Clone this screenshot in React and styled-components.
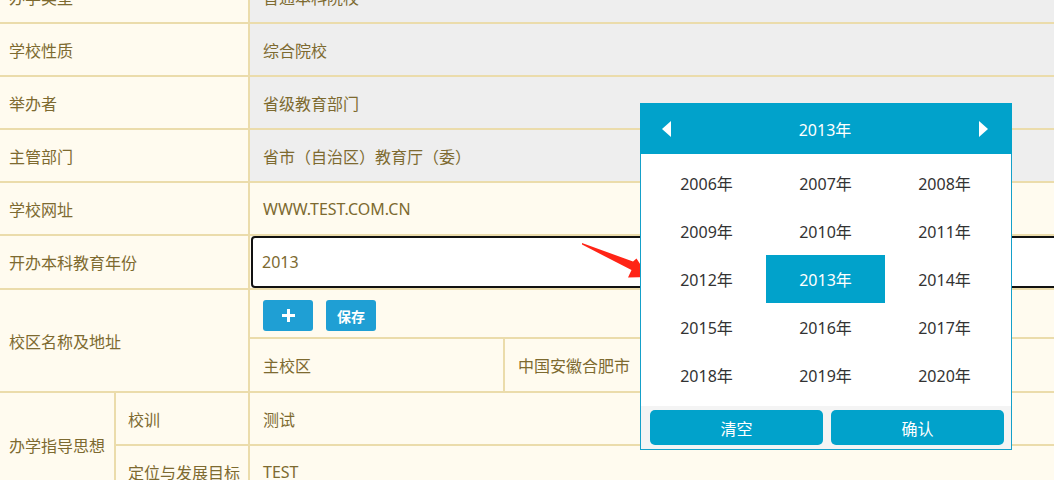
import React from 'react'
import styled, { createGlobalStyle } from 'styled-components'

const GlobalStyle = createGlobalStyle`
  html, body {
    margin: 0;
    padding: 0;
    background: #fffbef;
    overflow: hidden;
  }
  body {
    font-family: "Noto Sans", "Noto Sans CJK SC", sans-serif;
  }
`

const Page = styled.div`
  position: relative;
  width: 1054px;
  height: 480px;
  overflow: hidden;
`

const Table = styled.table`
  border-collapse: collapse;
  table-layout: fixed;
  width: 1400px;
  margin: -31px 0 0 -2px;
  background: #fffbef;
  color: #7d6a30;
  font-size: 16px;

  td {
    border: 2px solid #ebdcab;
    height: 51px;
    padding: 0 13px;
    white-space: nowrap;
    overflow: hidden;
  }
`

const Label = styled.td`
  && {
    padding-left: ${p => p.$sub ? '12px' : '9px'};
  }
`

const Value = styled.td`
  background: ${p => p.$gray ? '#eeeeee' : 'transparent'};
  && {
    height: ${p => p.$h || 51}px;
  }
`

const InputCell = styled.td`
  && {
    padding: 0;
  }
`

const YearInput = styled.div`
  box-sizing: border-box;
  height: 52px;
  margin-left: 1px;
  border: 2px solid #111;
  border-radius: 4px;
  background: #fff;
  display: flex;
  align-items: center;
  padding-left: 9px;
  color: #7d6a30;
`

const Tools = styled.div`
  display: flex;
  gap: 13px;
  padding-top: 4px;
`

const SmallBtn = styled.button`
  width: 50px;
  height: 31px;
  border: none;
  border-radius: 3px;
  background: #1f9fd4;
  color: #fff;
  font-family: "Noto Sans CJK SC", sans-serif;
  font-weight: 700;
  font-size: 14px;
  display: flex;
  align-items: center;
  justify-content: center;
  padding: 0;
`

const Picker = styled.div`
  position: absolute;
  left: 640px;
  top: 103px;
  width: 372px;
  box-sizing: border-box;
  border: 1px solid #15a0c9;
  border-top: none;
  background: #fff;
`

const PickerHead = styled.div`
  height: 51px;
  margin: 0 -1px;
  background: #01a2cb;
  color: #fff;
  display: flex;
  align-items: center;
  justify-content: space-between;
  padding: 0 24px 0 22px;
  font-size: 16px;
`

const Tri = styled.span`
  width: 0;
  height: 0;
  border-top: 8px solid transparent;
  border-bottom: 8px solid transparent;
  ${p => p.$dir === 'left'
    ? 'border-right: 9px solid #fff;'
    : 'border-left: 9px solid #fff;'}
`

const YearGrid = styled.div`
  display: grid;
  grid-template-columns: repeat(3, 119px);
  grid-auto-rows: 48px;
  padding: 5px 7px 7px 6px;
`

const YearCell = styled.div`
  display: flex;
  align-items: center;
  justify-content: center;
  font-size: 16px;
  color: ${p => p.$active ? '#fff' : '#333'};
  background: ${p => p.$active ? '#01a2cb' : 'transparent'};
`

const PickerFoot = styled.div`
  background: #f4f4f4;
  display: flex;
  gap: 8px;
  padding: 4px 7px 4px 9px;
`

const FootBtn = styled.button`
  flex: 1;
  height: 35px;
  border: none;
  border-radius: 5px;
  background: #01a2cb;
  color: #fff;
  font-family: "Noto Sans CJK SC", sans-serif;
  font-size: 16px;
  padding: 0;
`

const Arrow = styled.svg`
  position: absolute;
  left: 0;
  top: 0;
  pointer-events: none;
`

const years = Array.from({ length: 15 }, (_, i) => 2006 + i)

export default function App() {
  return (
    <Page>
      <GlobalStyle />
      <Table>
        <colgroup>
          <col style={{ width: 116 }} />
          <col style={{ width: 134 }} />
          <col style={{ width: 255 }} />
          <col />
        </colgroup>
        <tbody>
          <tr>
            <Label colSpan={2}>办学类型</Label>
            <Value colSpan={2} $gray>普通本科院校</Value>
          </tr>
          <tr>
            <Label colSpan={2}>学校性质</Label>
            <Value colSpan={2} $gray>综合院校</Value>
          </tr>
          <tr>
            <Label colSpan={2}>举办者</Label>
            <Value colSpan={2} $gray>省级教育部门</Value>
          </tr>
          <tr>
            <Label colSpan={2}>主管部门</Label>
            <Value colSpan={2} $gray>省市（自治区）教育厅（委）</Value>
          </tr>
          <tr>
            <Label colSpan={2}>学校网址</Label>
            <Value colSpan={2}>WWW.TEST.COM.CN</Value>
          </tr>
          <tr>
            <Label colSpan={2}>开办本科教育年份</Label>
            <InputCell colSpan={2}>
              <YearInput>2013</YearInput>
            </InputCell>
          </tr>
          <tr>
            <Label colSpan={2} rowSpan={2}>校区名称及地址</Label>
            <Value colSpan={2} $h={47}>
              <Tools>
                <SmallBtn>
                  <svg width="13" height="13" viewBox="0 0 13 13">
                    <rect x="5" y="0" width="3" height="13" fill="#fff" />
                    <rect x="0" y="5" width="13" height="3" fill="#fff" />
                  </svg>
                </SmallBtn>
                <SmallBtn>保存</SmallBtn>
              </Tools>
            </Value>
          </tr>
          <tr>
            <Value $h={52}>主校区</Value>
            <Value $h={52}>中国安徽合肥市</Value>
          </tr>
          <tr>
            <Label rowSpan={2}>办学指导思想</Label>
            <Label $sub>校训</Label>
            <Value colSpan={2}>测试</Value>
          </tr>
          <tr>
            <Label $sub>定位与发展目标</Label>
            <Value colSpan={2}>TEST</Value>
          </tr>
        </tbody>
      </Table>

      <Arrow width="1054" height="480" viewBox="0 0 1054 480">
        <polygon
          points="582,243 633,261.5 636.5,258.5 648.5,277 628,277.5 631.5,270 582,244.6"
          fill="#ff2416"
        />
      </Arrow>

      <Picker>
        <PickerHead>
          <Tri $dir="left" />
          <span>2013年</span>
          <Tri $dir="right" />
        </PickerHead>
        <YearGrid>
          {years.map(y => (
            <YearCell key={y} $active={y === 2013}>{y}年</YearCell>
          ))}
        </YearGrid>
        <PickerFoot>
          <FootBtn>清空</FootBtn>
          <FootBtn>确认</FootBtn>
        </PickerFoot>
      </Picker>
    </Page>
  )
}
